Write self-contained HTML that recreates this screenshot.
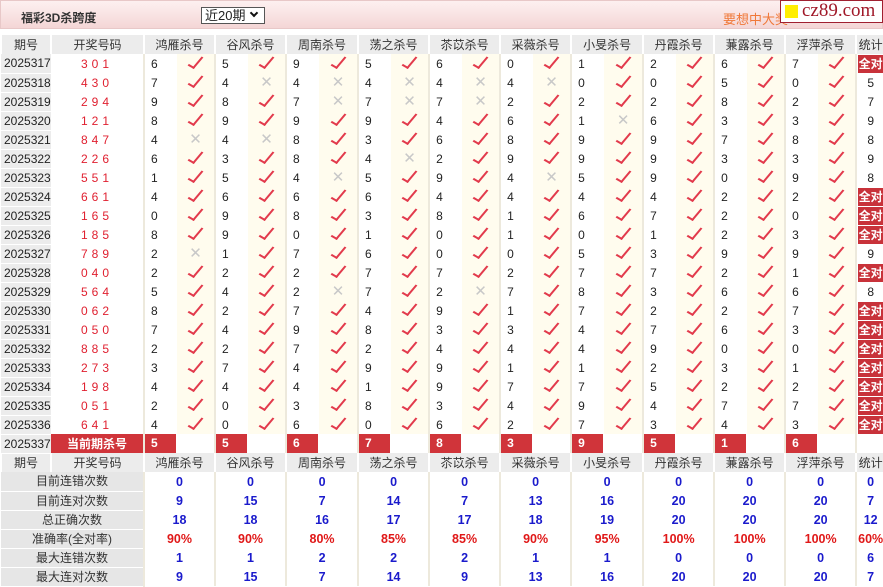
<!DOCTYPE html>
<html><head><meta charset="utf-8">
<style>
*{margin:0;padding:0;box-sizing:border-box}
body{width:883px;height:582px;overflow:hidden;background:#fff;font-family:"Liberation Sans","Noto Sans CJK SC",sans-serif;font-size:12px;color:#222;position:relative}
.top{position:absolute;left:0;top:0;width:883px;height:29px;background:linear-gradient(#fdf0f0,#f4d6d6);border:1px solid #e8c8c8}
.title{position:absolute;left:20px;top:8px;font-size:12px;font-weight:bold;color:#333}
.sel{position:absolute;left:200px;top:6px;width:64px;height:17px;border:1px solid #555;background:#fff;font-size:13px;line-height:15px;padding-left:3px}
.sel b{position:absolute;right:7px;top:2px;width:6px;height:6px;border-right:2px solid #111;border-bottom:2px solid #111;transform:rotate(45deg)}
.ad{position:absolute;left:722px;top:8px;color:#f07838;font-size:13px}
.logo{position:absolute;left:780px;top:0;width:103px;height:23px;background:#fff;border:1px solid #a02030;font-family:"Liberation Serif",serif;font-size:19px;color:#a01828;line-height:20px;padding-left:21px}
.logo i{position:absolute;left:4px;top:4px;width:13px;height:13px;background:#ffee00}
table{position:absolute;left:0;top:35px;border-collapse:collapse;table-layout:fixed;width:883px}
td{height:19px;line-height:18px;padding:0;white-space:nowrap;overflow:hidden}
tr.h td{background:#ececec;text-align:center;color:#333;border-left:2px solid #fff}
td.q{background:#ececec;border-bottom:1px solid #fff;padding-left:3px;color:#222}
td.k{color:#e02030;text-align:center;letter-spacing:4px}
td.n{padding-left:6px;border-left:2px solid #ede9dc}
td.c{background:#fffcee;text-align:center}
.ok{display:inline-block;width:7px;height:15px;border-right:2px solid #e23a4c;border-bottom:2px solid #e23a4c;transform:rotate(40deg) skewY(-10deg);margin-top:-5px;vertical-align:middle}
.x{color:#c8c8c8;font-size:15px}
td.s{text-align:center;border-left:2px solid #ede9dc}
.qd{display:block;background:#c8323a;color:#fff;font-weight:bold;height:18px;line-height:18px;margin:0 1px}
td.cur{background:#d0343a;color:#fff;font-weight:bold;text-align:center}
td.cn{padding:0;border-left:2px solid #ede9dc}
td.cn span{display:block;width:31px;height:19px;background:#d0343a;color:#fff;font-weight:bold;padding-left:6px;line-height:19px}
tr.st td{text-align:center;font-weight:bold;color:#1a1acc;font-size:12.5px;line-height:18px}
tr.st td.l{background:#e6e6e6;color:#333;font-weight:normal;font-size:12px;border-bottom:1px solid #fff}
tr.st td.v{border-left:2px solid #ede9dc}
tr.r td.v{color:#e01818}
</style></head><body>
<div class="top"><span class="title">福彩3D杀跨度</span><div class="sel">近20期<b></b></div><span class="ad">要想中大奖</span></div>
<div class="logo"><i></i>cz89.com</div>
<table>
<colgroup><col style="width:50px"><col style="width:93px">
<col style="width:33px"><col style="width:38px"><col style="width:33px"><col style="width:38px"><col style="width:33px"><col style="width:39px"><col style="width:33px"><col style="width:38px"><col style="width:33px"><col style="width:38px"><col style="width:33px"><col style="width:38px"><col style="width:33px"><col style="width:39px"><col style="width:33px"><col style="width:38px"><col style="width:33px"><col style="width:38px"><col style="width:33px"><col style="width:38px"><col style="width:28px"></colgroup>
<tr class="h"><td>期号</td><td>开奖号码</td><td colspan="2">鸿雁杀号</td><td colspan="2">谷风杀号</td><td colspan="2">周南杀号</td><td colspan="2">荡之杀号</td><td colspan="2">苶苡杀号</td><td colspan="2">采薇杀号</td><td colspan="2">小旻杀号</td><td colspan="2">丹霞杀号</td><td colspan="2">蒹露杀号</td><td colspan="2">浮萍杀号</td><td>统计</td></tr>
<tr><td class="q">2025317</td><td class="k">301</td><td class="n">6</td><td class="c"><i class="ok"></i></td><td class="n">5</td><td class="c"><i class="ok"></i></td><td class="n">9</td><td class="c"><i class="ok"></i></td><td class="n">5</td><td class="c"><i class="ok"></i></td><td class="n">6</td><td class="c"><i class="ok"></i></td><td class="n">0</td><td class="c"><i class="ok"></i></td><td class="n">1</td><td class="c"><i class="ok"></i></td><td class="n">2</td><td class="c"><i class="ok"></i></td><td class="n">6</td><td class="c"><i class="ok"></i></td><td class="n">7</td><td class="c"><i class="ok"></i></td><td class="s"><span class="qd">全对</span></td></tr>
<tr><td class="q">2025318</td><td class="k">430</td><td class="n">7</td><td class="c"><i class="ok"></i></td><td class="n">4</td><td class="c"><span class="x">✕</span></td><td class="n">4</td><td class="c"><span class="x">✕</span></td><td class="n">4</td><td class="c"><span class="x">✕</span></td><td class="n">4</td><td class="c"><span class="x">✕</span></td><td class="n">4</td><td class="c"><span class="x">✕</span></td><td class="n">0</td><td class="c"><i class="ok"></i></td><td class="n">0</td><td class="c"><i class="ok"></i></td><td class="n">5</td><td class="c"><i class="ok"></i></td><td class="n">0</td><td class="c"><i class="ok"></i></td><td class="s">5</td></tr>
<tr><td class="q">2025319</td><td class="k">294</td><td class="n">9</td><td class="c"><i class="ok"></i></td><td class="n">8</td><td class="c"><i class="ok"></i></td><td class="n">7</td><td class="c"><span class="x">✕</span></td><td class="n">7</td><td class="c"><span class="x">✕</span></td><td class="n">7</td><td class="c"><span class="x">✕</span></td><td class="n">2</td><td class="c"><i class="ok"></i></td><td class="n">2</td><td class="c"><i class="ok"></i></td><td class="n">2</td><td class="c"><i class="ok"></i></td><td class="n">8</td><td class="c"><i class="ok"></i></td><td class="n">2</td><td class="c"><i class="ok"></i></td><td class="s">7</td></tr>
<tr><td class="q">2025320</td><td class="k">121</td><td class="n">8</td><td class="c"><i class="ok"></i></td><td class="n">9</td><td class="c"><i class="ok"></i></td><td class="n">9</td><td class="c"><i class="ok"></i></td><td class="n">9</td><td class="c"><i class="ok"></i></td><td class="n">4</td><td class="c"><i class="ok"></i></td><td class="n">6</td><td class="c"><i class="ok"></i></td><td class="n">1</td><td class="c"><span class="x">✕</span></td><td class="n">6</td><td class="c"><i class="ok"></i></td><td class="n">3</td><td class="c"><i class="ok"></i></td><td class="n">3</td><td class="c"><i class="ok"></i></td><td class="s">9</td></tr>
<tr><td class="q">2025321</td><td class="k">847</td><td class="n">4</td><td class="c"><span class="x">✕</span></td><td class="n">4</td><td class="c"><span class="x">✕</span></td><td class="n">8</td><td class="c"><i class="ok"></i></td><td class="n">3</td><td class="c"><i class="ok"></i></td><td class="n">6</td><td class="c"><i class="ok"></i></td><td class="n">8</td><td class="c"><i class="ok"></i></td><td class="n">9</td><td class="c"><i class="ok"></i></td><td class="n">9</td><td class="c"><i class="ok"></i></td><td class="n">7</td><td class="c"><i class="ok"></i></td><td class="n">8</td><td class="c"><i class="ok"></i></td><td class="s">8</td></tr>
<tr><td class="q">2025322</td><td class="k">226</td><td class="n">6</td><td class="c"><i class="ok"></i></td><td class="n">3</td><td class="c"><i class="ok"></i></td><td class="n">8</td><td class="c"><i class="ok"></i></td><td class="n">4</td><td class="c"><span class="x">✕</span></td><td class="n">2</td><td class="c"><i class="ok"></i></td><td class="n">9</td><td class="c"><i class="ok"></i></td><td class="n">9</td><td class="c"><i class="ok"></i></td><td class="n">9</td><td class="c"><i class="ok"></i></td><td class="n">3</td><td class="c"><i class="ok"></i></td><td class="n">3</td><td class="c"><i class="ok"></i></td><td class="s">9</td></tr>
<tr><td class="q">2025323</td><td class="k">551</td><td class="n">1</td><td class="c"><i class="ok"></i></td><td class="n">5</td><td class="c"><i class="ok"></i></td><td class="n">4</td><td class="c"><span class="x">✕</span></td><td class="n">5</td><td class="c"><i class="ok"></i></td><td class="n">9</td><td class="c"><i class="ok"></i></td><td class="n">4</td><td class="c"><span class="x">✕</span></td><td class="n">5</td><td class="c"><i class="ok"></i></td><td class="n">9</td><td class="c"><i class="ok"></i></td><td class="n">0</td><td class="c"><i class="ok"></i></td><td class="n">9</td><td class="c"><i class="ok"></i></td><td class="s">8</td></tr>
<tr><td class="q">2025324</td><td class="k">661</td><td class="n">4</td><td class="c"><i class="ok"></i></td><td class="n">6</td><td class="c"><i class="ok"></i></td><td class="n">6</td><td class="c"><i class="ok"></i></td><td class="n">6</td><td class="c"><i class="ok"></i></td><td class="n">4</td><td class="c"><i class="ok"></i></td><td class="n">4</td><td class="c"><i class="ok"></i></td><td class="n">4</td><td class="c"><i class="ok"></i></td><td class="n">4</td><td class="c"><i class="ok"></i></td><td class="n">2</td><td class="c"><i class="ok"></i></td><td class="n">2</td><td class="c"><i class="ok"></i></td><td class="s"><span class="qd">全对</span></td></tr>
<tr><td class="q">2025325</td><td class="k">165</td><td class="n">0</td><td class="c"><i class="ok"></i></td><td class="n">9</td><td class="c"><i class="ok"></i></td><td class="n">8</td><td class="c"><i class="ok"></i></td><td class="n">3</td><td class="c"><i class="ok"></i></td><td class="n">8</td><td class="c"><i class="ok"></i></td><td class="n">1</td><td class="c"><i class="ok"></i></td><td class="n">6</td><td class="c"><i class="ok"></i></td><td class="n">7</td><td class="c"><i class="ok"></i></td><td class="n">2</td><td class="c"><i class="ok"></i></td><td class="n">0</td><td class="c"><i class="ok"></i></td><td class="s"><span class="qd">全对</span></td></tr>
<tr><td class="q">2025326</td><td class="k">185</td><td class="n">8</td><td class="c"><i class="ok"></i></td><td class="n">9</td><td class="c"><i class="ok"></i></td><td class="n">0</td><td class="c"><i class="ok"></i></td><td class="n">1</td><td class="c"><i class="ok"></i></td><td class="n">0</td><td class="c"><i class="ok"></i></td><td class="n">1</td><td class="c"><i class="ok"></i></td><td class="n">0</td><td class="c"><i class="ok"></i></td><td class="n">1</td><td class="c"><i class="ok"></i></td><td class="n">2</td><td class="c"><i class="ok"></i></td><td class="n">3</td><td class="c"><i class="ok"></i></td><td class="s"><span class="qd">全对</span></td></tr>
<tr><td class="q">2025327</td><td class="k">789</td><td class="n">2</td><td class="c"><span class="x">✕</span></td><td class="n">1</td><td class="c"><i class="ok"></i></td><td class="n">7</td><td class="c"><i class="ok"></i></td><td class="n">6</td><td class="c"><i class="ok"></i></td><td class="n">0</td><td class="c"><i class="ok"></i></td><td class="n">0</td><td class="c"><i class="ok"></i></td><td class="n">5</td><td class="c"><i class="ok"></i></td><td class="n">3</td><td class="c"><i class="ok"></i></td><td class="n">9</td><td class="c"><i class="ok"></i></td><td class="n">9</td><td class="c"><i class="ok"></i></td><td class="s">9</td></tr>
<tr><td class="q">2025328</td><td class="k">040</td><td class="n">2</td><td class="c"><i class="ok"></i></td><td class="n">2</td><td class="c"><i class="ok"></i></td><td class="n">2</td><td class="c"><i class="ok"></i></td><td class="n">7</td><td class="c"><i class="ok"></i></td><td class="n">7</td><td class="c"><i class="ok"></i></td><td class="n">2</td><td class="c"><i class="ok"></i></td><td class="n">7</td><td class="c"><i class="ok"></i></td><td class="n">7</td><td class="c"><i class="ok"></i></td><td class="n">2</td><td class="c"><i class="ok"></i></td><td class="n">1</td><td class="c"><i class="ok"></i></td><td class="s"><span class="qd">全对</span></td></tr>
<tr><td class="q">2025329</td><td class="k">564</td><td class="n">5</td><td class="c"><i class="ok"></i></td><td class="n">4</td><td class="c"><i class="ok"></i></td><td class="n">2</td><td class="c"><span class="x">✕</span></td><td class="n">7</td><td class="c"><i class="ok"></i></td><td class="n">2</td><td class="c"><span class="x">✕</span></td><td class="n">7</td><td class="c"><i class="ok"></i></td><td class="n">8</td><td class="c"><i class="ok"></i></td><td class="n">3</td><td class="c"><i class="ok"></i></td><td class="n">6</td><td class="c"><i class="ok"></i></td><td class="n">6</td><td class="c"><i class="ok"></i></td><td class="s">8</td></tr>
<tr><td class="q">2025330</td><td class="k">062</td><td class="n">8</td><td class="c"><i class="ok"></i></td><td class="n">2</td><td class="c"><i class="ok"></i></td><td class="n">7</td><td class="c"><i class="ok"></i></td><td class="n">4</td><td class="c"><i class="ok"></i></td><td class="n">9</td><td class="c"><i class="ok"></i></td><td class="n">1</td><td class="c"><i class="ok"></i></td><td class="n">7</td><td class="c"><i class="ok"></i></td><td class="n">2</td><td class="c"><i class="ok"></i></td><td class="n">2</td><td class="c"><i class="ok"></i></td><td class="n">7</td><td class="c"><i class="ok"></i></td><td class="s"><span class="qd">全对</span></td></tr>
<tr><td class="q">2025331</td><td class="k">050</td><td class="n">7</td><td class="c"><i class="ok"></i></td><td class="n">4</td><td class="c"><i class="ok"></i></td><td class="n">9</td><td class="c"><i class="ok"></i></td><td class="n">8</td><td class="c"><i class="ok"></i></td><td class="n">3</td><td class="c"><i class="ok"></i></td><td class="n">3</td><td class="c"><i class="ok"></i></td><td class="n">4</td><td class="c"><i class="ok"></i></td><td class="n">7</td><td class="c"><i class="ok"></i></td><td class="n">6</td><td class="c"><i class="ok"></i></td><td class="n">3</td><td class="c"><i class="ok"></i></td><td class="s"><span class="qd">全对</span></td></tr>
<tr><td class="q">2025332</td><td class="k">885</td><td class="n">2</td><td class="c"><i class="ok"></i></td><td class="n">2</td><td class="c"><i class="ok"></i></td><td class="n">7</td><td class="c"><i class="ok"></i></td><td class="n">2</td><td class="c"><i class="ok"></i></td><td class="n">4</td><td class="c"><i class="ok"></i></td><td class="n">4</td><td class="c"><i class="ok"></i></td><td class="n">4</td><td class="c"><i class="ok"></i></td><td class="n">9</td><td class="c"><i class="ok"></i></td><td class="n">0</td><td class="c"><i class="ok"></i></td><td class="n">0</td><td class="c"><i class="ok"></i></td><td class="s"><span class="qd">全对</span></td></tr>
<tr><td class="q">2025333</td><td class="k">273</td><td class="n">3</td><td class="c"><i class="ok"></i></td><td class="n">7</td><td class="c"><i class="ok"></i></td><td class="n">4</td><td class="c"><i class="ok"></i></td><td class="n">9</td><td class="c"><i class="ok"></i></td><td class="n">9</td><td class="c"><i class="ok"></i></td><td class="n">1</td><td class="c"><i class="ok"></i></td><td class="n">1</td><td class="c"><i class="ok"></i></td><td class="n">2</td><td class="c"><i class="ok"></i></td><td class="n">3</td><td class="c"><i class="ok"></i></td><td class="n">1</td><td class="c"><i class="ok"></i></td><td class="s"><span class="qd">全对</span></td></tr>
<tr><td class="q">2025334</td><td class="k">198</td><td class="n">4</td><td class="c"><i class="ok"></i></td><td class="n">4</td><td class="c"><i class="ok"></i></td><td class="n">4</td><td class="c"><i class="ok"></i></td><td class="n">1</td><td class="c"><i class="ok"></i></td><td class="n">9</td><td class="c"><i class="ok"></i></td><td class="n">7</td><td class="c"><i class="ok"></i></td><td class="n">7</td><td class="c"><i class="ok"></i></td><td class="n">5</td><td class="c"><i class="ok"></i></td><td class="n">2</td><td class="c"><i class="ok"></i></td><td class="n">2</td><td class="c"><i class="ok"></i></td><td class="s"><span class="qd">全对</span></td></tr>
<tr><td class="q">2025335</td><td class="k">051</td><td class="n">2</td><td class="c"><i class="ok"></i></td><td class="n">0</td><td class="c"><i class="ok"></i></td><td class="n">3</td><td class="c"><i class="ok"></i></td><td class="n">8</td><td class="c"><i class="ok"></i></td><td class="n">3</td><td class="c"><i class="ok"></i></td><td class="n">4</td><td class="c"><i class="ok"></i></td><td class="n">9</td><td class="c"><i class="ok"></i></td><td class="n">4</td><td class="c"><i class="ok"></i></td><td class="n">7</td><td class="c"><i class="ok"></i></td><td class="n">7</td><td class="c"><i class="ok"></i></td><td class="s"><span class="qd">全对</span></td></tr>
<tr><td class="q">2025336</td><td class="k">641</td><td class="n">4</td><td class="c"><i class="ok"></i></td><td class="n">0</td><td class="c"><i class="ok"></i></td><td class="n">6</td><td class="c"><i class="ok"></i></td><td class="n">0</td><td class="c"><i class="ok"></i></td><td class="n">6</td><td class="c"><i class="ok"></i></td><td class="n">2</td><td class="c"><i class="ok"></i></td><td class="n">7</td><td class="c"><i class="ok"></i></td><td class="n">3</td><td class="c"><i class="ok"></i></td><td class="n">4</td><td class="c"><i class="ok"></i></td><td class="n">3</td><td class="c"><i class="ok"></i></td><td class="s"><span class="qd">全对</span></td></tr>
<tr><td class="q">2025337</td><td class="cur">当前期杀号</td><td class="cn"><span>5</span></td><td></td><td class="cn"><span>5</span></td><td></td><td class="cn"><span>6</span></td><td></td><td class="cn"><span>7</span></td><td></td><td class="cn"><span>8</span></td><td></td><td class="cn"><span>3</span></td><td></td><td class="cn"><span>9</span></td><td></td><td class="cn"><span>5</span></td><td></td><td class="cn"><span>1</span></td><td></td><td class="cn"><span>6</span></td><td></td><td class="s"></td></tr>
<tr class="h"><td>期号</td><td>开奖号码</td><td colspan="2">鸿雁杀号</td><td colspan="2">谷风杀号</td><td colspan="2">周南杀号</td><td colspan="2">荡之杀号</td><td colspan="2">苶苡杀号</td><td colspan="2">采薇杀号</td><td colspan="2">小旻杀号</td><td colspan="2">丹霞杀号</td><td colspan="2">蒹露杀号</td><td colspan="2">浮萍杀号</td><td>统计</td></tr>
<tr class="st"><td class="l" colspan="2">目前连错次数</td><td class="v" colspan="2">0</td><td class="v" colspan="2">0</td><td class="v" colspan="2">0</td><td class="v" colspan="2">0</td><td class="v" colspan="2">0</td><td class="v" colspan="2">0</td><td class="v" colspan="2">0</td><td class="v" colspan="2">0</td><td class="v" colspan="2">0</td><td class="v" colspan="2">0</td><td class="v">0</td></tr>
<tr class="st"><td class="l" colspan="2">目前连对次数</td><td class="v" colspan="2">9</td><td class="v" colspan="2">15</td><td class="v" colspan="2">7</td><td class="v" colspan="2">14</td><td class="v" colspan="2">7</td><td class="v" colspan="2">13</td><td class="v" colspan="2">16</td><td class="v" colspan="2">20</td><td class="v" colspan="2">20</td><td class="v" colspan="2">20</td><td class="v">7</td></tr>
<tr class="st"><td class="l" colspan="2">总正确次数</td><td class="v" colspan="2">18</td><td class="v" colspan="2">18</td><td class="v" colspan="2">16</td><td class="v" colspan="2">17</td><td class="v" colspan="2">17</td><td class="v" colspan="2">18</td><td class="v" colspan="2">19</td><td class="v" colspan="2">20</td><td class="v" colspan="2">20</td><td class="v" colspan="2">20</td><td class="v">12</td></tr>
<tr class="st r"><td class="l" colspan="2">准确率(全对率)</td><td class="v" colspan="2">90%</td><td class="v" colspan="2">90%</td><td class="v" colspan="2">80%</td><td class="v" colspan="2">85%</td><td class="v" colspan="2">85%</td><td class="v" colspan="2">90%</td><td class="v" colspan="2">95%</td><td class="v" colspan="2">100%</td><td class="v" colspan="2">100%</td><td class="v" colspan="2">100%</td><td class="v">60%</td></tr>
<tr class="st"><td class="l" colspan="2">最大连错次数</td><td class="v" colspan="2">1</td><td class="v" colspan="2">1</td><td class="v" colspan="2">2</td><td class="v" colspan="2">2</td><td class="v" colspan="2">2</td><td class="v" colspan="2">1</td><td class="v" colspan="2">1</td><td class="v" colspan="2">0</td><td class="v" colspan="2">0</td><td class="v" colspan="2">0</td><td class="v">6</td></tr>
<tr class="st"><td class="l" colspan="2">最大连对次数</td><td class="v" colspan="2">9</td><td class="v" colspan="2">15</td><td class="v" colspan="2">7</td><td class="v" colspan="2">14</td><td class="v" colspan="2">9</td><td class="v" colspan="2">13</td><td class="v" colspan="2">16</td><td class="v" colspan="2">20</td><td class="v" colspan="2">20</td><td class="v" colspan="2">20</td><td class="v">7</td></tr>
</table>
</body></html>
